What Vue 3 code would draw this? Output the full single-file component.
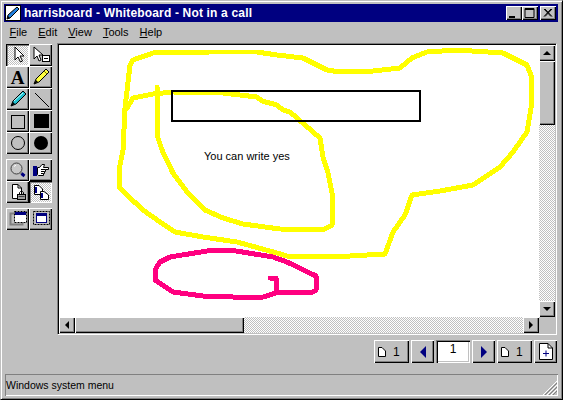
<template>
  <div class="window">
    <!-- title bar -->
    <div class="titlebar">
      <svg class="app-icon" width="16" height="16" viewBox="0 0 16 16">
        <rect x="0.5" y="0.5" width="15" height="15" fill="#fff" stroke="#000" />
        <path d="M2 14 L3 10 L12 2 L14 4 L5 13 Z" fill="#2080e0" stroke="#000" stroke-width="1" />
        <path d="M2 14 L3 11 L5 13 Z" fill="#000" />
      </svg>
      <span class="title-text">harrisboard - Whiteboard - Not in a call</span>
      <div class="caption-btns">
        <button class="cap"><svg width="16" height="14"><rect x="3" y="10" width="6" height="2" /></svg></button>
        <button class="cap"><svg width="16" height="14"><path d="M3 2.500H12V11.500H3ZM3 3.500H12" fill="none" stroke="#000" /></svg></button>
        <button class="cap close"><svg width="16" height="14"><path d="M4 3L11 10.500M5 3L12 10.500M11 3L4 10.500M12 3L5 10.500" stroke="#000" /></svg></button>
      </div>
    </div>

    <!-- menu -->
    <div class="menubar">
      <span v-for="m in menus" :key="m.rest" class="menu-item"><u>{{ m.key }}</u>{{ m.rest }}</span>
    </div>

    <div class="main">
      <!-- tools -->
      <div class="toolbar">
        <div class="tool-group">
          <button class="tool pressed">
            <svg width="22" height="22"><path d="M8 3V16L11 13L13.500 18L15.500 17L13 12H17Z" fill="#fff" stroke="#000" /></svg>
          </button>
          <button class="tool">
            <svg width="22" height="22"><path d="M4 3V15L7 12L9 17L11 16L9 11H13Z" fill="#fff" stroke="#000" /><rect x="12.500" y="11.500" width="7" height="6" fill="#fff" stroke="#000" /><path d="M14 14.500H18" stroke="#000" /></svg>
          </button>
          <button class="tool">
            <span class="glyph-a">A</span>
          </button>
          <button class="tool">
            <svg width="22" height="22"><path d="M4 18L6 13L16 3L19 6L9 16Z" fill="#ffff40" stroke="#000" /><path d="M4 18L6 14L8 16Z" fill="#000" /><path d="M14 5L17 8" stroke="#808000" /></svg>
          </button>
          <button class="tool">
            <svg width="22" height="22"><path d="M4 18L6 13L16 3L19 6L9 16Z" fill="#20c0d0" stroke="#000" /><path d="M4 18L6 14L8 16Z" fill="#000" /><path d="M7 13L16 5" stroke="#c0ffff" /></svg>
          </button>
          <button class="tool">
            <svg width="22" height="22"><path d="M5 5L19 19" stroke="#000" /></svg>
          </button>
          <button class="tool">
            <svg width="22" height="22"><rect x="4.500" y="5.500" width="13" height="13" fill="none" stroke="#000" /></svg>
          </button>
          <button class="tool">
            <svg width="22" height="22"><rect x="4" y="4" width="15" height="14" fill="#000" /></svg>
          </button>
          <button class="tool">
            <svg width="22" height="22"><circle cx="11" cy="11" r="6.500" fill="none" stroke="#000" /></svg>
          </button>
          <button class="tool">
            <svg width="22" height="22"><circle cx="11" cy="11" r="7" fill="#000" /></svg>
          </button>
        </div>

        <div class="tool-group">
          <button class="tool">
            <svg width="22" height="22"><circle cx="9.500" cy="9.500" r="5.500" fill="#c8c8c8" stroke="#404040" /><path d="M7 7.500L9 6" stroke="#fff" /><path d="M13.500 13.500L15 15" stroke="#808080" stroke-width="2" /><path d="M14.500 14.500L17.500 17" stroke="#000080" stroke-width="3" /></svg>
          </button>
          <button class="tool">
            <svg width="22" height="22"><rect x="3" y="7" width="4" height="10" fill="#000080" /><path d="M7.500 8.500H9.500L12 5.500H14.500L13.500 8.500H18.500V10.500H15.500V12.500H14.500V14.500H13.500V16.500H8.500L7.500 15.500Z" fill="#fff" stroke="#000" /><path d="M11 10.500H15.500M11 12.500H14.500M11 14.500H13.500" stroke="#000" /></svg>
          </button>
          <button class="tool">
            <svg width="22" height="22"><path d="M5.500 3.500H11L14.500 7V17.500H5.500Z" fill="#fff" stroke="#000" /><path d="M11 3.500V7H14.500" fill="none" stroke="#000" /><rect x="10.500" y="13.500" width="8" height="5" fill="#a0a0a0" stroke="#000" /><path d="M12.500 13.500V11.500L13.500 10.500H15.500L16.500 11.500V13.500" fill="none" stroke="#000" /><path d="M11.500 15.500H17.500" stroke="#404040" /></svg>
          </button>
          <button class="tool pressed">
            <svg width="22" height="22"><path d="M4.500 4.500H9L12.500 8V13.500H4.500Z" fill="#fff" stroke="#000" /><path d="M10.500 10.500H14L18.500 14V18.500H10.500Z" fill="#fff" stroke="#000" /><path d="M6 6V12M12 12V17" stroke="#000080" stroke-width="2" /></svg>
          </button>
        </div>

        <div class="tool-group">
          <button class="tool">
            <svg width="22" height="22"><rect x="3.500" y="5.500" width="12" height="11" fill="none" stroke="#808080" stroke-width="2" /><rect x="7.500" y="3.500" width="12" height="11" fill="#fff" stroke="#000" stroke-dasharray="2 1" /><rect x="8" y="4" width="11" height="3" fill="#000080" /></svg>
          </button>
          <button class="tool">
            <svg width="22" height="22"><rect x="3.500" y="3.500" width="16" height="13" fill="none" stroke="#000" stroke-dasharray="2 1" /><rect x="6.500" y="5.500" width="10" height="9" fill="#fff" stroke="#000080" /><rect x="6" y="5" width="11" height="3" fill="#000080" /></svg>
          </button>
        </div>
      </div>

      <!-- drawing area -->
      <div class="frame">
        <div class="canvas">
          <svg class="drawing" width="481" height="272" viewBox="59 45 481 272">
            <polyline class="ink yellow" :points="outerLoop" />
            <polyline class="ink yellow" :points="innerLoop" />
            <polyline class="ink pink" :points="pinkLoop" />
            <rect x="172" y="91" width="248" height="30" fill="none" stroke="#000" stroke-width="2" />
          </svg>
          <span class="note">You can write yes</span>
        </div>

        <div class="vscroll">
          <button class="sb-btn"><i class="arrow up"></i></button>
          <div class="track">
            <div class="thumb v-thumb"></div>
          </div>
          <button class="sb-btn"><i class="arrow down"></i></button>
        </div>

        <div class="hscroll">
          <button class="sb-btn"><i class="arrow left"></i></button>
          <div class="track h-track">
            <div class="thumb h-thumb"></div>
          </div>
          <button class="sb-btn"><i class="arrow right"></i></button>
        </div>
        <div class="corner"></div>
      </div>
    </div>

    <!-- page navigation -->
    <div class="pagebar">
      <button class="nav wide">
        <svg width="10" height="12"><path d="M1.500 1.500H5L8.500 5V10.500H1.500Z" fill="#fff" stroke="#000" /></svg>
        <span>1</span>
      </button>
      <button class="nav"><i class="nav-arrow prev"></i></button>
      <div class="page-input">1</div>
      <button class="nav"><i class="nav-arrow next"></i></button>
      <button class="nav wide">
        <svg width="10" height="12"><path d="M1.500 1.500H5L8.500 5V10.500H1.500Z" fill="#fff" stroke="#000" /></svg>
        <span>1</span>
      </button>
      <button class="nav">
        <svg width="14" height="17"><path d="M0.500 0.500H9L13.500 5V16.500H0.500Z" fill="#fff" stroke="#000" /><path d="M9 0.500V5H13.500" fill="none" stroke="#000" /><path d="M4 10.500H10M7 7.500V13.500" stroke="#000080" /></svg>
      </button>
    </div>

    <!-- status -->
    <div class="statusbar">
      <span>Windows system menu</span>
      <svg class="grip" width="14" height="14"><path d="M13 1L1 13M14 2L2 14M13 5L5 13M14 6L6 14M13 9L9 13M14 10L10 14" stroke="#808080" /><path d="M14 0L0 14M14 4L4 14M14 8L8 14" stroke="#fff" /></svg>
    </div>
  </div>
</template>

<script setup>
const menus = [
  { key: 'F', rest: 'ile' },
  { key: 'E', rest: 'dit' },
  { key: 'V', rest: 'iew' },
  { key: 'T', rest: 'ools' },
  { key: 'H', rest: 'elp' }
]

// strokes in window coordinates
const outerLoop = '125,108 130,65 133,60 153,53 210,52 257,52 277,55 303,58 327,70 340,72 373,71 400,68 412,58 427,52 457,50 503,53 527,65 531,75 531,108 527,132 513,152 500,167 473,185 440,191 412,195 405,215 393,232 385,254 350,256 287,256 277,253 237,242 203,237 175,232 160,222 143,210 127,195 119,187 119,170 123,150 125,108'
const innerLoop = '127,108 133,98 153,94 173,92 223,93 257,97 262,101 277,105 283,110 290,112 320,138 323,157 328,173 333,198 332,225 323,230 280,229 243,224 223,218 205,210 187,192 173,173 162,150 157,135 157,87'
const pinkLoop = '270,278 276,278 276,292 313,292 316,290 316,276 287,262 273,257 230,250 207,251 170,257 160,262 155,270 155,280 173,292 203,296 233,297 263,297 276,293'
</script>

<style scoped>
.window {
  box-sizing: border-box;
  width: 563px;
  height: 400px;
  padding: 4px;
  display: flex;
  flex-direction: column;
  background: #c0c0c0;
  border-top: 1px solid #c0c0c0;
  border-left: 1px solid #c0c0c0;
  border-right: 1px solid #000;
  border-bottom: 1px solid #000;
  box-shadow: inset 1px 1px 0 #fff, inset -1px -1px 0 #808080;
  font-family: "Liberation Sans", Arial, sans-serif;
  font-size: 11px;
  color: #000;
  overflow: hidden;
}

button {
  padding: 0;
  margin: 0;
  border: 0;
  display: flex;
  align-items: center;
  justify-content: center;
  background: #c0c0c0;
  color: #000;
  font: inherit;
  box-shadow: inset 1px 1px 0 #fff, inset -1px -1px 0 #000, inset -2px -2px 0 #808080;
}

.titlebar {
  height: 18px;
  margin-top: -1px;
  margin-left: -1px;
  display: flex;
  align-items: center;
  background: #000080;
  color: #fff;
  flex-shrink: 0;
}

.app-icon {
  margin: 0 3px 0 1px;
}

.title-text {
  font-weight: 700;
  font-size: 12px;
  letter-spacing: 0.17px;
  white-space: nowrap;
}

.caption-btns {
  margin-left: auto;
  margin-right: 2px;
  display: flex;
}

.cap {
  width: 16px;
  height: 14px;
}

.close {
  margin-left: 2px;
}

.menubar {
  height: 18px;
  margin-top: 1px;
  margin-left: -1px;
  display: flex;
  align-items: center;
  flex-shrink: 0;
}

.menu-item {
  padding: 0 5.5px;
  font-size: 11px;
  color: #000;
}

.main {
  height: 292px;
  margin-top: 2px;
  display: flex;
  flex-shrink: 0;
}

.toolbar {
  width: 52px;
  padding: 1px 0 0 1px;
  box-sizing: border-box;
  flex-shrink: 0;
  display: flex;
  flex-direction: column;
  gap: 5px;
}

.tool-group {
  display: grid;
  grid-template-columns: 23px 23px;
  grid-auto-rows: 22px;
}

.tool {
  width: 23px;
  height: 22px;
}

.pressed {
  background: repeating-conic-gradient(#fff 0 25%, #c0c0c0 0 50%) 0 0 / 2px 2px;
  box-shadow: inset 1px 1px 0 #000, inset 2px 2px 0 #808080, inset -1px -1px 0 #fff;
}

.glyph-a {
  font-family: "Liberation Serif", serif;
  font-weight: 700;
  font-size: 19px;
  line-height: 1;
}

.frame {
  flex: 1;
  margin-right: 1px;
  display: grid;
  grid-template-columns: 1fr 16px;
  grid-template-rows: 1fr 16px;
  border-top: 1px solid #808080;
  border-left: 1px solid #808080;
  border-right: 1px solid #fff;
  border-bottom: 1px solid #fff;
  box-shadow: inset 1px 1px 0 #000, inset -1px -1px 0 #c0c0c0;
  padding: 1px;
  min-width: 0;
}

.canvas {
  position: relative;
  background: #fff;
  overflow: hidden;
}

.drawing {
  display: block;
}

.ink {
  fill: none;
  stroke-linejoin: round;
  stroke-linecap: round;
  shape-rendering: crispEdges;
}

.yellow {
  stroke: #ffff00;
  stroke-width: 5;
}

.pink {
  stroke: #ff0080;
  stroke-width: 5;
}

.note {
  position: absolute;
  left: 145px;
  top: 104px;
  font-size: 11px;
  line-height: 14px;
  white-space: nowrap;
}

.vscroll {
  display: flex;
  flex-direction: column;
}

.hscroll {
  display: flex;
}

.sb-btn {
  width: 16px;
  height: 16px;
  flex-shrink: 0;
}

.track {
  flex: 1;
  background: repeating-conic-gradient(#fff 0 25%, #c0c0c0 0 50%) 0 0 / 2px 2px;
}

.thumb {
  background: #c0c0c0;
  box-shadow: inset 1px 1px 0 #fff, inset -1px -1px 0 #000, inset -2px -2px 0 #808080;
}

.v-thumb {
  height: 64px;
}

.h-thumb {
  width: 169px;
  height: 16px;
}

.arrow {
  display: block;
  width: 0;
  height: 0;
  border-style: solid;
  border-color: transparent;
}

.up {
  border-width: 0 4px 4px;
  border-bottom-color: #000;
}

.down {
  border-width: 4px 4px 0;
  border-top-color: #000;
}

.left {
  border-width: 4px 4px 4px 0;
  border-right-color: #000;
}

.right {
  border-width: 4px 0 4px 4px;
  border-left-color: #000;
}

.corner {
  background: #c0c0c0;
}

.pagebar {
  height: 23px;
  margin-top: 5px;
  margin-right: 1px;
  display: flex;
  justify-content: flex-end;
  gap: 2px;
  flex-shrink: 0;
}

.nav {
  width: 23px;
  height: 23px;
}

.wide {
  box-sizing: border-box;
  width: 35px;
  padding-left: 3px;
  gap: 6px;
  justify-content: flex-start;
  font-size: 12px;
}

.nav-arrow {
  display: block;
  width: 0;
  height: 0;
  border-style: solid;
  border-color: transparent;
}

.prev {
  border-width: 6px 6px 6px 0;
  border-right-color: #000080;
}

.next {
  border-width: 6px 0 6px 6px;
  border-left-color: #000080;
}

.page-input {
  box-sizing: border-box;
  width: 34px;
  height: 23px;
  background: #fff;
  text-align: center;
  font-size: 12px;
  line-height: 19px;
  box-shadow: inset 1px 1px 0 #808080, inset 2px 2px 0 #000, inset -1px -1px 0 #fff, inset -2px -2px 0 #c0c0c0;
}

.statusbar {
  height: 22px;
  margin-top: 11px;
  padding-left: 1px;
  display: flex;
  align-items: center;
  position: relative;
  flex-shrink: 0;
  font-size: 10.5px;
  box-shadow: inset 1px 1px 0 #808080, inset -1px -1px 0 #fff;
}

.grip {
  position: absolute;
  right: 1px;
  bottom: 1px;
}
</style>

<style>
html, body {
  margin: 0;
  background: #c0c0c0;
}
</style>
